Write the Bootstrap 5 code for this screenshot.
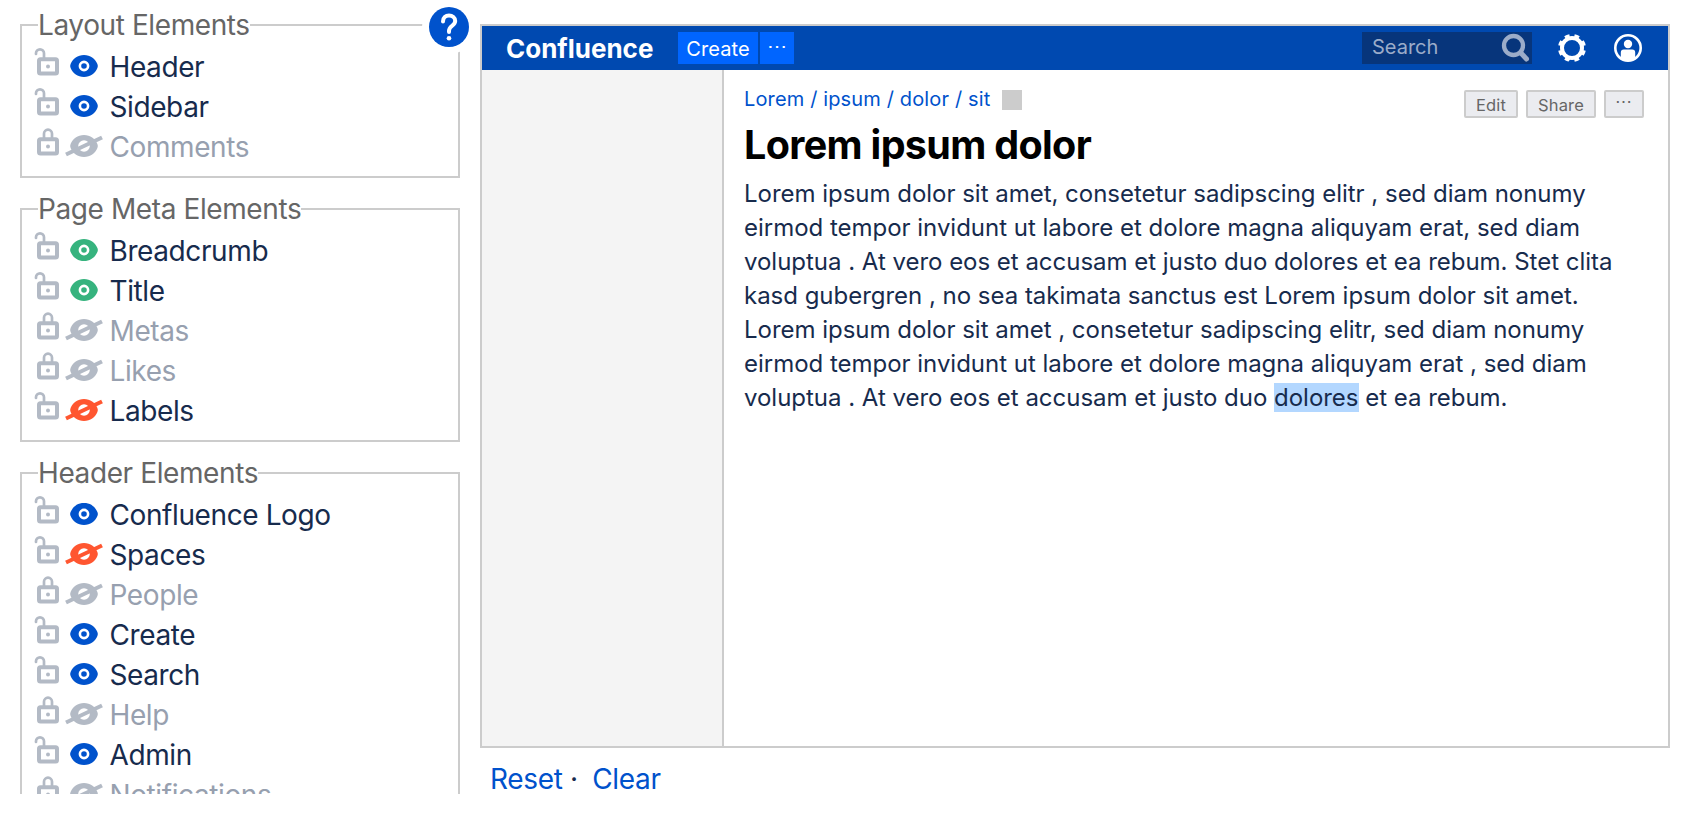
<!DOCTYPE html>
<html lang="en">
<head>
<meta charset="utf-8">
<title>Confluence theme elements</title>
<link rel="stylesheet" href="https://cdn.jsdelivr.net/npm/bootstrap@5.3.0/dist/css/bootstrap.min.css">
<style>
  body { font-family: Inter, "Liberation Sans", sans-serif; color: #172b4d; background: #fff; height: 818px; overflow: hidden; }
  a { color: #0052cc; text-decoration: none; }
  .panel-list { width: 480px; height: 794px; padding: 24px 20px 0; overflow: hidden; }
  .group { border: 2px solid #ccc; margin-bottom: 30px; padding: 0 0 10px 12px; font-size: 28px; letter-spacing: -.4px; }
  .group-title { height: 40px; line-height: 40px; margin: -21px 0 1px 4px; white-space: nowrap; }
  .group-title span { background: #fff; color: #666; display: inline-block; }
  .element { height: 40px; line-height: 42px; white-space: nowrap; }
  .element svg { flex: none; display: block; }
  .element span { padding-left: 5.5px; }
  .element.off { color: #97a0af; }
  .lock { color: #b3bac5; }
  .shown { color: #0052cc; } .forced { color: #36b37e; } .blocked { color: #ff5630; } .off .blocked { color: #b3bac5; }
  .help { position: absolute; left: 429px; top: 7px; width: 40px; height: 40px; border-radius: 50%; box-shadow: 0 0 0 7px #fff; background: #0052cc; }
  .preview { width: 1190px; height: 724px; border: 2px solid #ccc; margin-top: 24px; }
  .topbar { height: 44px; background: #0049b0; color: #fff; padding-left: 24px; padding-right: 26px; }
  .logo { font-size: 26px; font-weight: 700; letter-spacing: 0; width: 172px; line-height: 44px; padding-top: 2px; }
  .create { height: 32px; line-height: 34px; background: #0065ff; font-size: 20px; text-align: center; letter-spacing: .1px; }
  .find { width: 170px; height: 32px; background: #07357b; color: #9bacc9; font-size: 20px; line-height: 30px; padding: 0 1px 0 10px; margin-right: 26px; }
  .side { width: 242px; background: #f4f4f4; border-right: 2px solid #ccc; }
  .content { padding: 20px 24px 0 20px; }
  .crumbs { font-size: 20px; line-height: 19px; letter-spacing: .14px; white-space: nowrap; }
  .swatch { width: 20px; height: 20px; background: #ccc; margin-left: 11.5px; }
  .tool { height: 28px; border: 2px solid #ccc; border-radius: 2px; background: #ebecf0; color: #666; font-size: 16.5px; letter-spacing: .2px; line-height: 26px; text-align: center; }
  .heading { font-size: 39.5px; line-height: 48px; font-weight: 700; color: #000; letter-spacing: -.67px; margin: 3px 0 8px; white-space: nowrap; }
  .copy { font-size: 24px; letter-spacing: -.02px; line-height: 34px; white-space: nowrap; }
  .copy mark { background: #b3d7ff; color: inherit; padding: 0; }
  .actions { font-size: 28px; letter-spacing: -.35px; line-height: 40px; padding: 11px 0 0 10px; }
  .actions a + a { margin-left: 7px; }
</style>
</head>
<body>
<svg width="0" height="0" class="position-absolute">
  <symbol id="open" viewBox="0 0 30 40"><g fill="none" stroke="currentColor"><rect x="5" y="13.200" width="18" height="14.300" rx="1.500" stroke-width="4"/><path d="M2 8v-.7a4 4 0 0 1 8 0V13" stroke-width="2.700" stroke-linecap="round"/></g><circle cx="14" cy="20.500" r="2" fill="currentColor"/></symbol>
  <symbol id="shut" viewBox="0 0 30 40"><g fill="none" stroke="currentColor"><rect x="5" y="13.200" width="18" height="14.300" rx="1.500" stroke-width="4"/><path d="M10 13V7.700a4 4 0 0 1 8 0V13" stroke-width="2.700"/></g><circle cx="14" cy="20.500" r="2" fill="currentColor"/></symbol>
  <symbol id="eye" viewBox="0 0 40 40"><path fill="currentColor" d="M20 9c6.500 0 11 3.500 13.400 9q.900 2 0 4C31 27.500 26.500 31 20 31S9 27.500 6.600 22q-.9-2 0-4C9 12.500 13.500 9 20 9z"/><circle cx="20" cy="20" r="4.100" fill="currentColor" stroke="#fff" stroke-width="2.600"/></symbol>
  <symbol id="blind" viewBox="0 0 40 40"><path fill="currentColor" d="M20 9c6.500 0 11 3.500 13.400 9q.900 2 0 4C31 27.500 26.500 31 20 31S9 27.500 6.600 22q-.9-2 0-4C9 12.500 13.500 9 20 9z"/><circle cx="20" cy="20" r="5.800" fill="#fff"/><path d="M2 28.500 38 11.500" stroke="currentColor" stroke-width="4"/></symbol>
</svg>
<main class="d-flex position-relative">
  <section class="panel-list flex-shrink-0">
    <div class="group">
      <div class="group-title"><span>Layout Elements</span></div>
      <div class="element d-flex"><svg class="lock" width="30" height="40"><use href="#open"/></svg><svg class="shown" width="40" height="40"><use href="#eye"/></svg><span>Header</span></div>
      <div class="element d-flex"><svg class="lock" width="30" height="40"><use href="#open"/></svg><svg class="shown" width="40" height="40"><use href="#eye"/></svg><span>Sidebar</span></div>
      <div class="element off d-flex"><svg class="lock" width="30" height="40"><use href="#shut"/></svg><svg class="blocked" width="40" height="40"><use href="#blind"/></svg><span>Comments</span></div>
    </div>
    <div class="group">
      <div class="group-title"><span>Page Meta Elements</span></div>
      <div class="element d-flex"><svg class="lock" width="30" height="40"><use href="#open"/></svg><svg class="forced" width="40" height="40"><use href="#eye"/></svg><span>Breadcrumb</span></div>
      <div class="element d-flex"><svg class="lock" width="30" height="40"><use href="#open"/></svg><svg class="forced" width="40" height="40"><use href="#eye"/></svg><span>Title</span></div>
      <div class="element off d-flex"><svg class="lock" width="30" height="40"><use href="#shut"/></svg><svg class="blocked" width="40" height="40"><use href="#blind"/></svg><span>Metas</span></div>
      <div class="element off d-flex"><svg class="lock" width="30" height="40"><use href="#shut"/></svg><svg class="blocked" width="40" height="40"><use href="#blind"/></svg><span>Likes</span></div>
      <div class="element d-flex"><svg class="lock" width="30" height="40"><use href="#open"/></svg><svg class="blocked" width="40" height="40"><use href="#blind"/></svg><span>Labels</span></div>
    </div>
    <div class="group">
      <div class="group-title"><span>Header Elements</span></div>
      <div class="element d-flex"><svg class="lock" width="30" height="40"><use href="#open"/></svg><svg class="shown" width="40" height="40"><use href="#eye"/></svg><span>Confluence Logo</span></div>
      <div class="element d-flex"><svg class="lock" width="30" height="40"><use href="#open"/></svg><svg class="blocked" width="40" height="40"><use href="#blind"/></svg><span>Spaces</span></div>
      <div class="element off d-flex"><svg class="lock" width="30" height="40"><use href="#shut"/></svg><svg class="blocked" width="40" height="40"><use href="#blind"/></svg><span>People</span></div>
      <div class="element d-flex"><svg class="lock" width="30" height="40"><use href="#open"/></svg><svg class="shown" width="40" height="40"><use href="#eye"/></svg><span>Create</span></div>
      <div class="element d-flex"><svg class="lock" width="30" height="40"><use href="#open"/></svg><svg class="shown" width="40" height="40"><use href="#eye"/></svg><span>Search</span></div>
      <div class="element off d-flex"><svg class="lock" width="30" height="40"><use href="#shut"/></svg><svg class="blocked" width="40" height="40"><use href="#blind"/></svg><span>Help</span></div>
      <div class="element d-flex"><svg class="lock" width="30" height="40"><use href="#open"/></svg><svg class="shown" width="40" height="40"><use href="#eye"/></svg><span>Admin</span></div>
      <div class="element off d-flex"><svg class="lock" width="30" height="40"><use href="#shut"/></svg><svg class="blocked" width="40" height="40"><use href="#blind"/></svg><span>Notifications</span></div>
    </div>
  </section>
  <a href="#" class="help" aria-label="Help"><svg class="d-block" width="40" height="40" viewBox="0 0 40 40"><path d="M14 14.500c0-4 2.700-6 6-6s6.200 2.200 6.200 5.500c0 4.600-6.200 5-6.200 9.800V25" fill="none" stroke="#fff" stroke-width="4" stroke-linecap="round"/><circle cx="20" cy="31.300" r="2.300" fill="#fff"/></svg></a>
  <section class="flex-shrink-0">
    <div class="preview d-flex flex-column">
      <div class="topbar d-flex align-items-center">
        <div class="logo">Confluence</div>
        <div class="create" style="width:80px">Create</div>
        <div class="create ms-auto me-auto" style="width:34px;margin-left:2px!important;line-height:28px">⋯</div>
        <div class="find d-flex justify-content-between"><span>Search</span><svg width="30" height="32" viewBox="0 0 30 32" fill="none" stroke="#9bacc9"><circle cx="12.500" cy="13.500" r="9.500" stroke-width="4.300"/><path d="m19.500 20.500 6 6.500" stroke-width="5" stroke-linecap="round"/></svg></div>
        <svg class="me-4" width="28" height="28" viewBox="-14 -14 28 28" fill="none" stroke="#fff" style="margin-right:28px!important"><circle r="10" stroke-width="4"/><circle r="12.300" stroke-width="3.400" pathLength="80" stroke-dasharray="5 5" transform="rotate(11.250)"/></svg>
        <svg width="28" height="28" viewBox="-14 -14 28 28"><circle r="12.700" fill="none" stroke="#fff" stroke-width="2.600"/><circle cy="-4" r="4.200" fill="#fff"/><path d="M-7.200 11V4.500a3 3 0 0 1 3-3h8.400a3 3 0 0 1 3 3V11Q0 15-7.200 11z" fill="#fff"/></svg>
      </div>
      <div class="d-flex flex-grow-1">
        <div class="side flex-shrink-0"></div>
        <div class="content flex-grow-1">
          <div class="d-flex justify-content-between" style="height:28px">
            <div class="crumbs d-flex"><a href="#">Lorem / ipsum / dolor / sit</a><span class="swatch"></span></div>
            <div class="d-flex gap-2">
              <div class="tool" style="width:54px">Edit</div>
              <div class="tool" style="width:70px">Share</div>
              <div class="tool" style="width:40px;line-height:18px">⋯</div>
            </div>
          </div>
          <h1 class="heading">Lorem ipsum dolor</h1>
          <div class="copy">Lorem ipsum dolor sit amet, consetetur sadipscing elitr , sed diam nonumy<br>eirmod tempor invidunt ut labore et dolore magna aliquyam erat, sed diam<br>voluptua . At vero eos et accusam et justo duo dolores et ea rebum. Stet clita<br>kasd gubergren , no sea takimata sanctus est Lorem ipsum dolor sit amet.<br>Lorem ipsum dolor sit amet , consetetur sadipscing elitr, sed diam nonumy<br>eirmod tempor invidunt ut labore et dolore magna aliquyam erat , sed diam<br>voluptua . At vero eos et accusam et justo duo <mark>dolores</mark> et ea rebum.</div>
        </div>
      </div>
    </div>
    <div class="actions"><a href="#">Reset</a> · <a href="#">Clear</a></div>
  </section>
</main>
<script src="https://cdn.jsdelivr.net/npm/bootstrap@5.3.0/dist/js/bootstrap.bundle.min.js"></script>
</body>
</html>
